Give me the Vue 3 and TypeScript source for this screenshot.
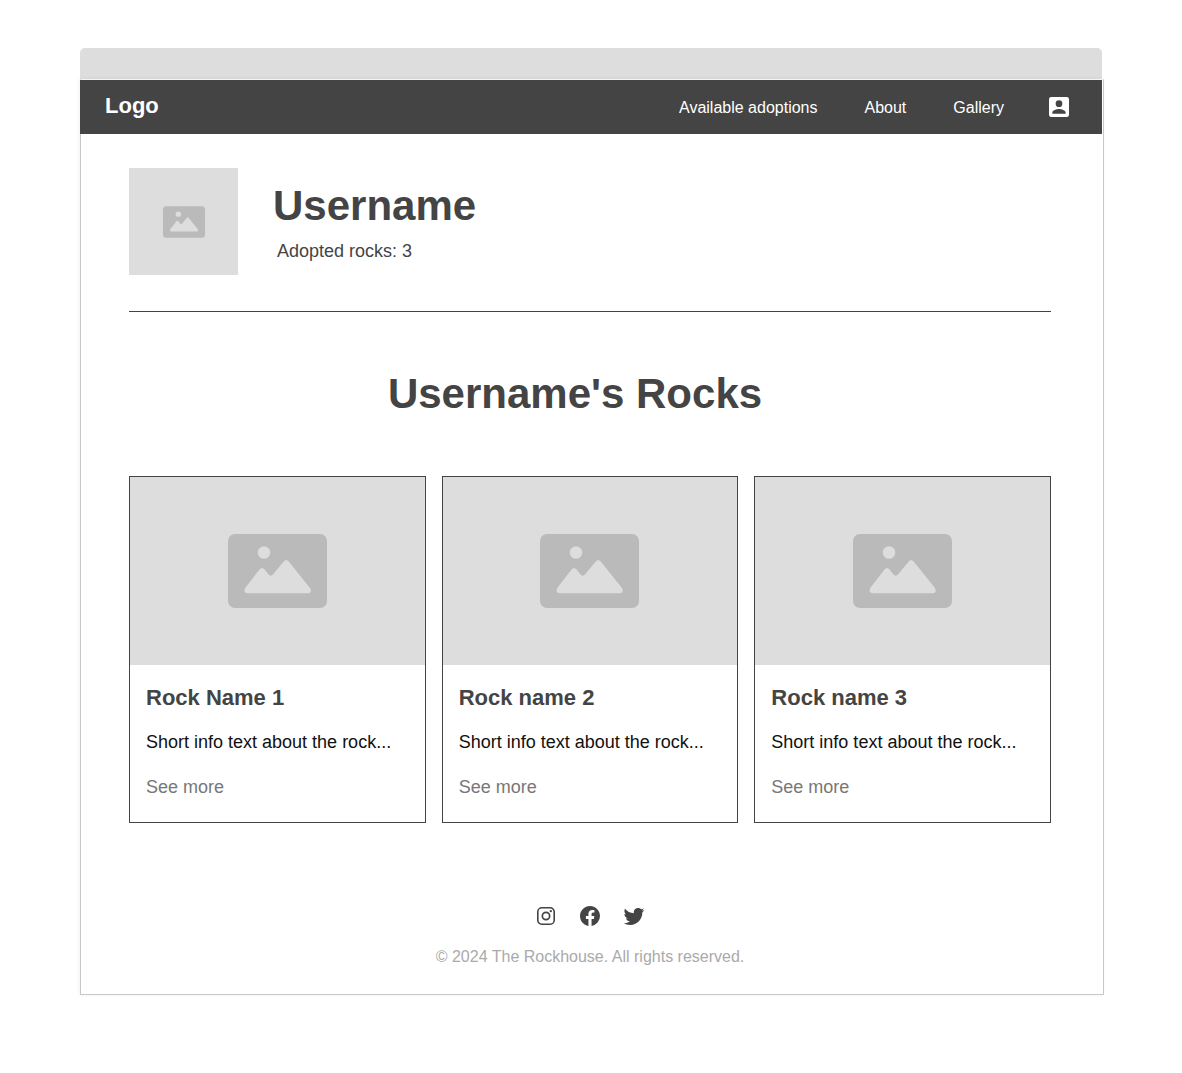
<script setup lang="ts">
interface NavLink {
  label: string
  href: string
}

interface Rock {
  id: number
  name: string
  info: string
}

interface SocialLink {
  label: string
  href: string
  path: string
}

const username = 'Username'

const navLinks: NavLink[] = [
  { label: 'Available adoptions', href: '#adoptions' },
  { label: 'About', href: '#about' },
  { label: 'Gallery', href: '#gallery' },
]

const rocks: Rock[] = [
  { id: 1, name: 'Rock Name 1', info: 'Short info text about the rock...' },
  { id: 2, name: 'Rock name 2', info: 'Short info text about the rock...' },
  { id: 3, name: 'Rock name 3', info: 'Short info text about the rock...' },
]

const socials: SocialLink[] = [
  {
    label: 'Instagram',
    href: '#instagram',
    path: 'M7.8 3h8.4A4.8 4.8 0 0 1 21 7.800v8.400a4.800 4.800 0 0 1-4.800 4.800H7.800A4.800 4.800 0 0 1 3 16.200V7.800A4.800 4.800 0 0 1 7.800 3m0 1.600a3.200 3.200 0 0 0-3.200 3.200v8.400c0 1.770 1.430 3.200 3.200 3.200h8.400a3.200 3.200 0 0 0 3.200-3.200V7.800c0-1.770-1.430-3.200-3.200-3.200H7.800m9 1.400a1.150 1.150 0 1 1 0 2.300 1.150 1.150 0 0 1 0-2.300M12 7.500a4.500 4.500 0 1 1 0 9 4.500 4.500 0 0 1 0-9m0 1.700a2.800 2.800 0 1 0 0 5.600 2.800 2.800 0 0 0 0-5.600z',
  },
  {
    label: 'Facebook',
    href: '#facebook',
    path: 'M12 2.040C6.500 2.040 2 6.530 2 12.060C2 17.060 5.660 21.210 10.440 21.960V14.960H7.900V12.060H10.440V9.850C10.440 7.340 11.930 5.960 14.220 5.960C15.310 5.960 16.450 6.150 16.450 6.150V8.620H15.190C13.950 8.620 13.560 9.390 13.560 10.180V12.060H16.340L15.890 14.960H13.560V21.960A10 10 0 0 0 22 12.060C22 6.530 17.500 2.040 12 2.040Z',
  },
  {
    label: 'Twitter',
    href: '#twitter',
    path: 'M22.460 6c-.77.35-1.600.58-2.460.69.88-.53 1.560-1.370 1.880-2.380-.83.5-1.750.85-2.720 1.050C18.370 4.500 17.260 4 16 4c-2.350 0-4.270 1.920-4.270 4.290 0 .34.04.67.11.98C8.280 9.090 5.110 7.380 3 4.790c-.37.63-.58 1.370-.58 2.150 0 1.490.75 2.810 1.910 3.560-.71 0-1.370-.2-1.950-.5v.03c0 2.080 1.480 3.820 3.440 4.210a4.220 4.220 0 0 1-1.930.07 4.280 4.280 0 0 0 4 2.980 8.521 8.521 0 0 1-5.330 1.840c-.34 0-.68-.02-1.020-.06C3.440 20.290 5.700 21 8.120 21 16 21 20.330 14.460 20.330 8.790c0-.19 0-.37-.01-.56.84-.6 1.560-1.360 2.140-2.230z',
  },
]
</script>

<template>
  <div class="window">
    <div class="titlebar"></div>
    <div class="page">
      <header class="header">
        <a class="logo" href="#home">Logo</a>
        <div class="actions">
          <nav class="nav">
            <a v-for="link in navLinks" :key="link.label" :href="link.href">{{ link.label }}</a>
          </nav>
          <button class="account" type="button" aria-label="Account">
            <svg viewBox="3 3 18 18" width="20" height="20" aria-hidden="true">
              <path
                fill="currentColor"
                d="M6 17c0-2 4-3.100 6-3.100s6 1.100 6 3.100v1H6m9-9a3 3 0 0 1-3 3 3 3 0 0 1-3-3 3 3 0 0 1 3-3 3 3 0 0 1 3 3M3 5v14a2 2 0 0 0 2 2h14a2 2 0 0 0 2-2V5a2 2 0 0 0-2-2H5a2 2 0 0 0-2 2z"
              />
            </svg>
          </button>
        </div>
      </header>

      <main class="content">
        <section class="profile">
          <div class="avatar">
            <svg viewBox="0 0 99 74" width="42" height="32" aria-hidden="true">
              <rect class="shade" width="99" height="74" rx="7" />
              <circle class="light" cx="36" cy="18.500" r="6.300" />
              <path
                class="light"
                d="M17.200 54 31.500 35.500Q34 32.500 36.500 35.500L40.300 40.300Q42.700 43 45.200 40.300L55.700 27.500Q58.200 24.500 60.700 27.500L82 54Q84.500 59.200 79.500 59.200H20Q15 59.200 17.200 54Z"
              />
            </svg>
          </div>
          <div class="identity">
            <h1>{{ username }}</h1>
            <p>Adopted rocks: {{ rocks.length }}</p>
          </div>
        </section>

        <hr />

        <h2 class="section-title">{{ username }}'s Rocks</h2>

        <section class="cards">
          <article v-for="rock in rocks" :key="rock.id" class="card">
            <div class="picture">
              <svg viewBox="0 0 99 74" width="99" height="74" aria-hidden="true">
                <rect class="shade" width="99" height="74" rx="7" />
                <circle class="light" cx="36" cy="18.500" r="6.300" />
                <path
                  class="light"
                  d="M17.200 54 31.500 35.500Q34 32.500 36.500 35.500L40.300 40.300Q42.700 43 45.200 40.300L55.700 27.500Q58.200 24.500 60.700 27.500L82 54Q84.500 59.200 79.500 59.200H20Q15 59.200 17.200 54Z"
                />
              </svg>
            </div>
            <div class="card-body">
              <h3>{{ rock.name }}</h3>
              <p>{{ rock.info }}</p>
              <a :href="'#rock-' + rock.id">See more</a>
            </div>
          </article>
        </section>
      </main>

      <footer class="footer">
        <div class="socials">
          <a v-for="social in socials" :key="social.label" :href="social.href" :aria-label="social.label">
            <svg viewBox="0 0 24 24" width="24" height="24" aria-hidden="true">
              <path fill="currentColor" fill-rule="evenodd" :d="social.path" />
            </svg>
          </a>
        </div>
        <p>© 2024 The Rockhouse. All rights reserved.</p>
      </footer>
    </div>
  </div>
</template>

<style>
body {
  background: #fff;
}
</style>

<style scoped>
.window {
  padding: 48px 78px 48px 80px;
  color: #444;
  font-family: "Liberation Sans", Arial, sans-serif;
}

h1,
h2,
h3,
p {
  margin: 0;
}

a {
  color: inherit;
  text-decoration: none;
}

svg {
  display: block;
}

.titlebar {
  height: 31px;
  margin-right: 2px;
  border-radius: 5px 5px 0 0;
  background: #ddd;
}

.page {
  border: 1px solid #c8c8c8;
  border-top-color: #f4f4f4;
  background: #fff;
  box-shadow: -1px 0 4px rgba(0, 0, 0, 0.06);
}

.header {
  display: flex;
  align-items: center;
  justify-content: space-between;
  height: 54px;
  margin: 0 1px 0 -1px;
  padding: 0 33px 0 25px;
  box-sizing: border-box;
  background: #444;
  color: #fff;
}

.logo {
  padding-bottom: 3px;
  font-size: 22px;
  line-height: 28px;
  font-weight: 700;
}

.actions {
  display: flex;
  align-items: center;
  gap: 45px;
}

.nav {
  display: flex;
  gap: 47px;
  padding-top: 2px;
  font-size: 16px;
  line-height: 24px;
}

.account {
  display: block;
  padding: 0;
  border: 0;
  background: none;
  color: #fff;
}

.content {
  padding: 34px 52px 0 48px;
}

.profile {
  display: flex;
  gap: 35px;
}

.avatar,
.picture {
  display: flex;
  align-items: center;
  justify-content: center;
  background: #ddd;
}

.avatar {
  width: 109px;
  height: 107px;
}

.shade {
  fill: #bababa;
}

.light {
  fill: #ddd;
}

.identity {
  padding-top: 14px;
}

h1,
h2 {
  font-size: 42px;
  line-height: 48px;
}

.identity p {
  padding: 9px 0 0 4px;
  font-size: 18px;
  line-height: 24px;
}

hr {
  height: 1px;
  margin: 36px 0 0;
  border: 0;
  background: #444;
}

.section-title {
  padding: 58px 30px 58px 0;
  text-align: center;
}

.cards {
  display: grid;
  grid-template-columns: repeat(3, 1fr);
  gap: 16px;
}

.card {
  border: 1px solid #444;
}

.picture {
  height: 188px;
}

.card-body {
  padding: 19px 16px 23px;
  font-size: 18px;
  line-height: 24px;
}

.card-body h3 {
  font-size: 22px;
  line-height: 28px;
}

.card-body p {
  margin: 18px 0 21px;
  color: #111;
}

.card-body a {
  display: block;
  color: #777;
}

.footer {
  display: flex;
  flex-direction: column;
  align-items: center;
  gap: 17px;
  padding: 81px 52px 25px 48px;
}

.socials {
  display: flex;
  gap: 20px;
}

.footer p {
  color: #aaa;
  font-size: 16px;
  line-height: 24px;
}
</style>
